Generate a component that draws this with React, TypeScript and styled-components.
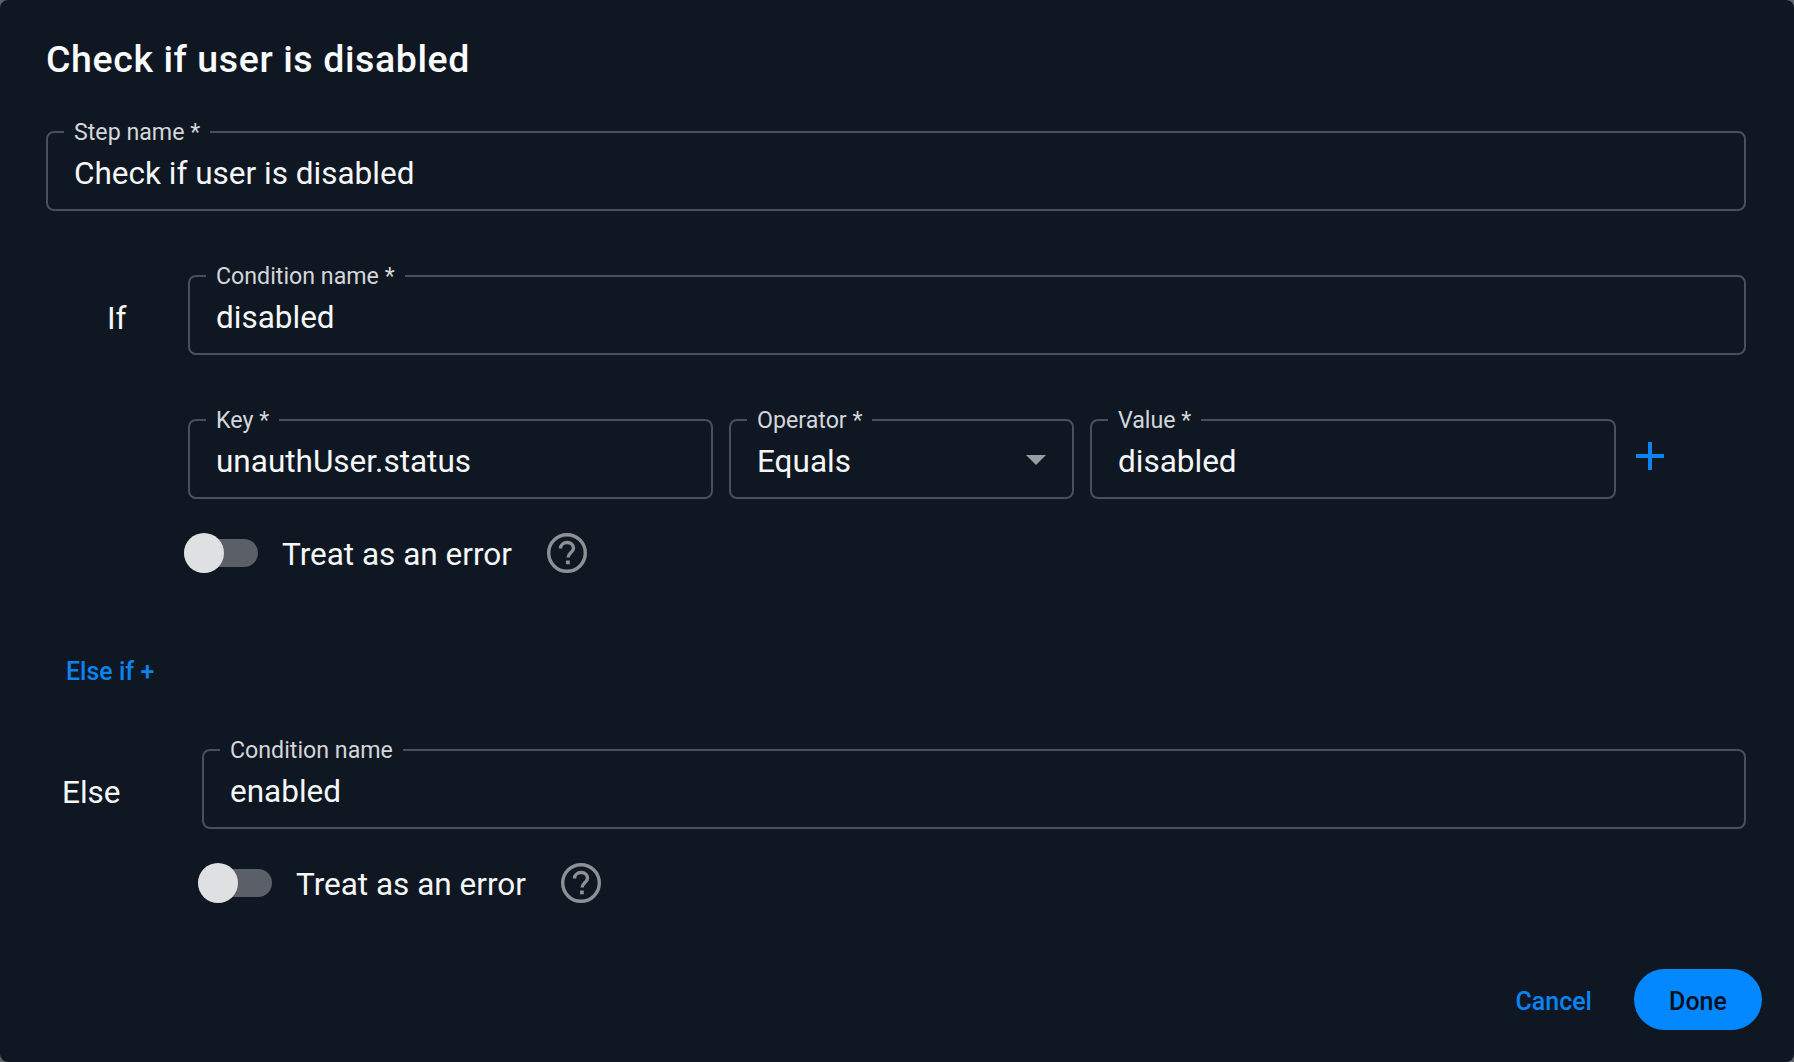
import React from "react";
import styled, { createGlobalStyle } from "styled-components";

const Global = createGlobalStyle`
  html, body { margin: 0; padding: 0; background: #5f646c; }
  * { box-sizing: border-box; }
`;

const FONT = `Roboto, "Liberation Sans", sans-serif`;

const Dialog = styled.div`
  width: 1794px;
  height: 1062px;
  background: #0f1722;
  border-radius: 8px;
  padding: 40px 32px 32px 46px;
  font-family: ${FONT};
  color: #f5f6f7;
  display: flex;
  flex-direction: column;
  overflow: hidden;
`;

const Title = styled.h2`
  margin: 0 0 53px;
  font-size: 37.5px;
  line-height: 38px;
  letter-spacing: 0.6px;
  font-weight: 500;
  color: #fafbfc;
`;

const Field = styled.fieldset<{ $width?: number }>`
  margin: 0;
  padding: 0 26px;
  min-width: 0;
  height: 80px;
  border: 2px solid #4a505a;
  border-radius: 8px;
  ${(p) => (p.$width ? `width: ${p.$width}px; flex: none;` : "flex: 1;")}
  position: relative;
`;

const Legend = styled.legend`
  padding: 0 10px;
  margin-left: -10px;
  height: 2px;
  font-size: 23.2px;
  line-height: 2px;
  color: #d3d6da;
  white-space: nowrap;
`;

const Value = styled.div`
  font-size: 31.5px;
  line-height: 40px;
  margin-top: 21px;
  color: #f5f6f7;
`;

const StepField = styled(Field)`
  flex: none;
  margin-right: 16px;
`;

const ConditionRow = styled.div<{ $top: number }>`
  display: flex;
  align-items: center;
  margin-top: ${(p) => p.$top}px;
  padding-right: 16px;
`;

const BranchLabel = styled.div<{ $width: number; $indent: number }>`
  width: ${(p) => p.$width}px;
  flex: none;
  padding-left: ${(p) => p.$indent}px;
  padding-top: 8px;
  font-size: 31.5px;
  line-height: 40px;
`;

const KeyRow = styled.div`
  display: flex;
  align-items: center;
  gap: 16px;
  margin: 64px 0 0 142px;
`;

const Caret = styled.span`
  position: absolute;
  right: 26px;
  top: 34px;
  width: 0;
  height: 0;
  border-left: 10px solid transparent;
  border-right: 10px solid transparent;
  border-top: 10px solid #9a9da1;
`;

const AddButton = styled.button`
  width: 30px;
  height: 32px;
  margin: -6px 0 0 3px;
  padding: 0;
  background: none;
  border: none;
  display: flex;
`;

const ToggleRow = styled.div<{ $left: number; $top: number }>`
  display: flex;
  align-items: center;
  margin: ${(p) => p.$top}px 0 0 ${(p) => p.$left}px;
  height: 40px;
`;

const Track = styled.div`
  width: 74px;
  height: 28px;
  border-radius: 14px;
  background: #5b5f67;
  position: relative;
  flex: none;
  margin-right: 24px;
`;

const Thumb = styled.div`
  position: absolute;
  left: 0;
  top: -6px;
  width: 40px;
  height: 40px;
  border-radius: 50%;
  background: #dfe0e2;
`;

const ToggleText = styled.span`
  font-size: 31.5px;
  line-height: 40px;
  padding-top: 4px;
  margin-right: 35px;
`;

const ElseIf = styled.button`
  align-self: flex-start;
  margin: 83px 0 0 20px;
  padding: 0;
  background: none;
  border: none;
  font-family: ${FONT};
  font-size: 25px;
  line-height: 32px;
  font-weight: 500;
  color: #0a84f0;
`;

const Footer = styled.div`
  margin-top: auto;
  display: flex;
  justify-content: flex-end;
  align-items: center;
`;

const CancelButton = styled.button`
  padding: 3px 0 0;
  margin-right: 42px;
  background: none;
  border: none;
  font-family: ${FONT};
  font-size: 25px;
  font-weight: 500;
  color: #0a84f0;
`;

const DoneButton = styled.button`
  width: 128px;
  height: 61px;
  padding: 3px 0 0;
  border: none;
  border-radius: 31px;
  background: #0488ff;
  color: #06101c;
  font-family: ${FONT};
  font-size: 25px;
  font-weight: 500;
`;

const HelpIcon = () => (
  <svg width="40" height="40" viewBox="0 0 40 40" fill="none" aria-hidden="true">
    <circle cx="20" cy="20" r="18.3" stroke="#8d9095" strokeWidth="3.4" />
    <path d="M13.5 15.5c0-3.6 2.9-6 6.6-6 3.6 0 6.4 2.3 6.4 5.6 0 4.6-5.4 4.9-5.4 9.4" stroke="#8d9095" strokeWidth="3.4" />
    <rect x="19" y="27.5" width="3.8" height="3.8" fill="#8d9095" />
  </svg>
);

const PlusIcon = () => (
  <svg width="30" height="32" viewBox="0 0 30 32" aria-hidden="true">
    <rect x="13" y="2" width="4" height="28" fill="#0a84f0" />
    <rect x="1" y="14" width="28" height="4" fill="#0a84f0" />
  </svg>
);

const TreatAsError = ({ left, top }: { left: number; top: number }) => (
  <ToggleRow $left={left} $top={top}>
    <Track>
      <Thumb />
    </Track>
    <ToggleText>Treat as an error</ToggleText>
    <HelpIcon />
  </ToggleRow>
);

export default function App() {
  return (
    <>
      <Global />
      <Dialog>
        <Title>Check if user is disabled</Title>
        <StepField>
          <Legend>Step name *</Legend>
          <Value>Check if user is disabled</Value>
        </StepField>
        <ConditionRow $top={64}>
          <BranchLabel $width={142} $indent={61}>If</BranchLabel>
          <Field>
            <Legend>Condition name *</Legend>
            <Value>disabled</Value>
          </Field>
        </ConditionRow>
        <KeyRow>
          <Field $width={525}>
            <Legend>Key *</Legend>
            <Value>unauthUser.status</Value>
          </Field>
          <Field $width={345}>
            <Legend>Operator *</Legend>
            <Value>Equals</Value>
            <Caret />
          </Field>
          <Field $width={526}>
            <Legend>Value *</Legend>
            <Value>disabled</Value>
          </Field>
          <AddButton aria-label="Add"><PlusIcon /></AddButton>
        </KeyRow>
        <TreatAsError left={138} top={34} />
        <ElseIf>Else if +</ElseIf>
        <ConditionRow $top={61}>
          <BranchLabel $width={156} $indent={16}>Else</BranchLabel>
          <Field>
            <Legend>Condition name</Legend>
            <Value>enabled</Value>
          </Field>
        </ConditionRow>
        <TreatAsError left={152} top={34} />
        <Footer>
          <CancelButton>Cancel</CancelButton>
          <DoneButton>Done</DoneButton>
        </Footer>
      </Dialog>
    </>
  );
}
